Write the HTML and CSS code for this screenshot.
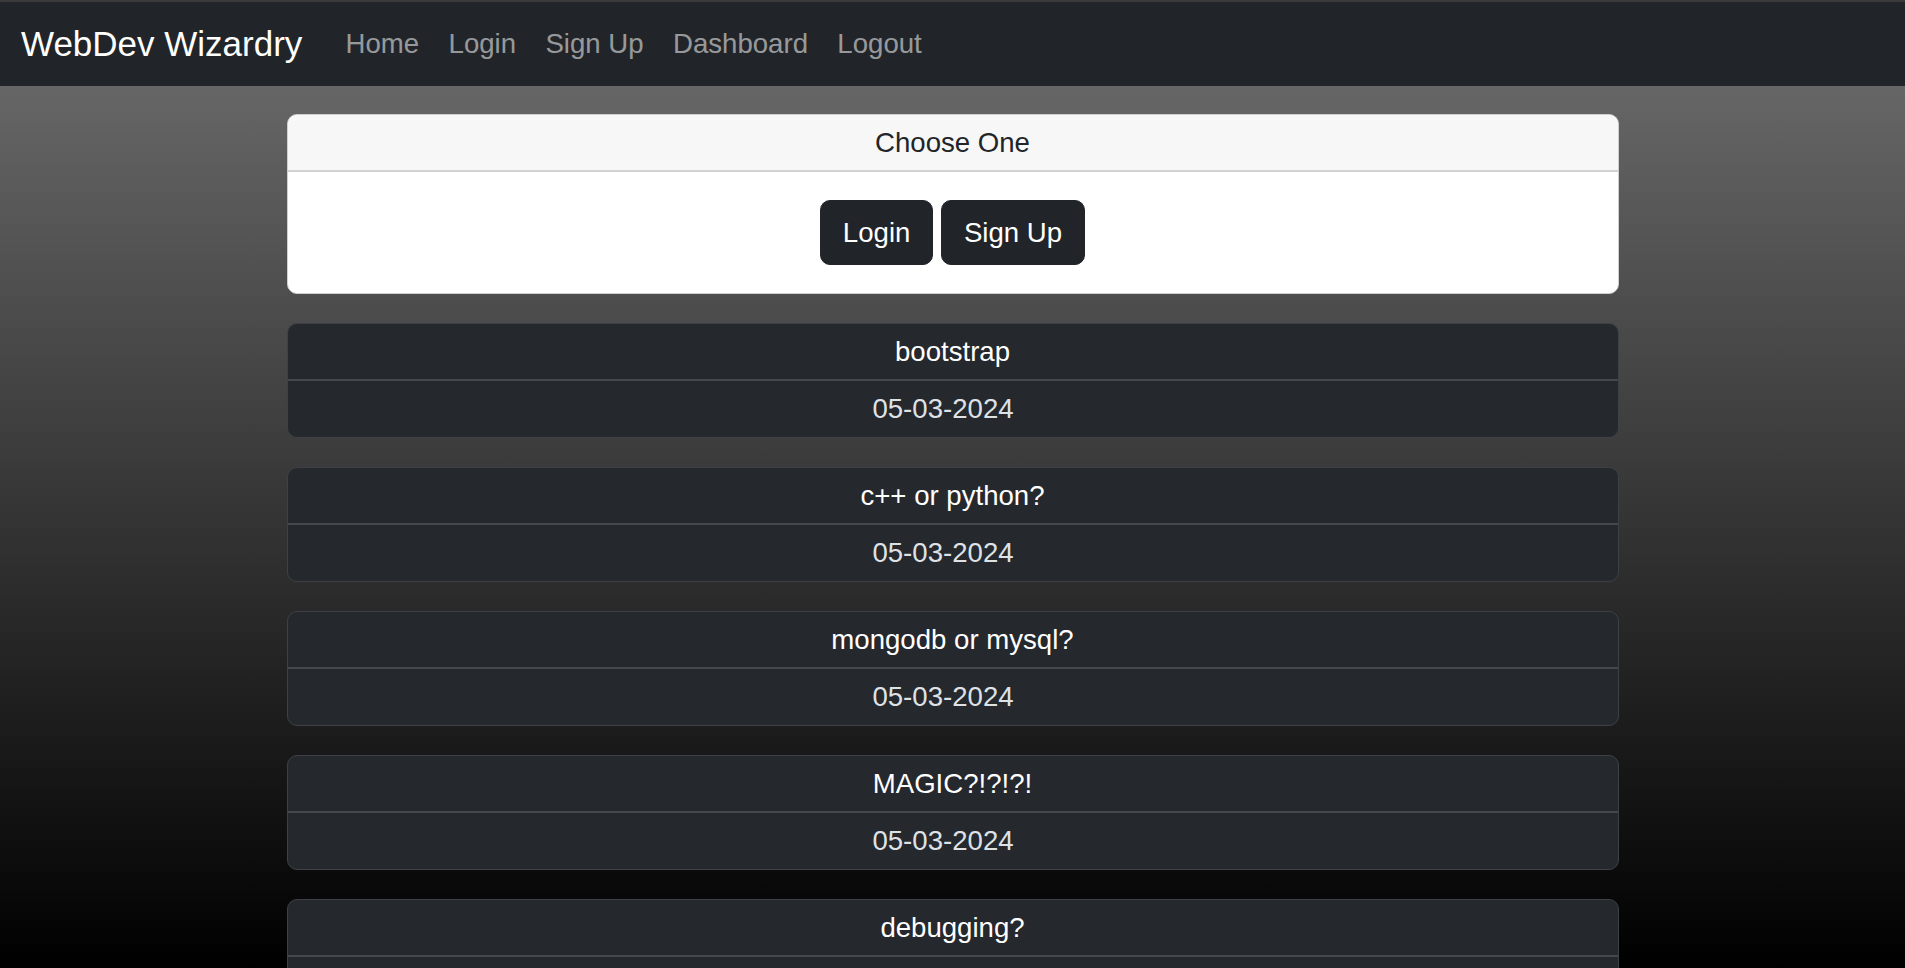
FILE: index.html
```html
<!DOCTYPE html>
<html lang="en">
<head>
<meta charset="utf-8">
<title>WebDev Wizardry</title>
<link rel="stylesheet" href="styles.css">
</head>
<body>
<nav class="navbar">
  <a class="brand" href="#">WebDev Wizardry</a>
  <ul class="nav">
    <li><a class="nav-link" href="#">Home</a></li>
    <li><a class="nav-link" href="#">Login</a></li>
    <li><a class="nav-link" href="#">Sign Up</a></li>
    <li><a class="nav-link" href="#">Dashboard</a></li>
    <li><a class="nav-link" href="#">Logout</a></li>
  </ul>
</nav>
<main class="content">
  <section class="card card-light">
    <div class="card-header">Choose One</div>
    <div class="card-body actions">
      <a class="btn" href="#">Login</a>
      <a class="btn" href="#">Sign Up</a>
    </div>
  </section>
  <article class="card card-dark">
    <div class="card-header">bootstrap</div>
    <div class="card-body date">05-03-2024</div>
  </article>
  <article class="card card-dark">
    <div class="card-header">c++ or python?</div>
    <div class="card-body date">05-03-2024</div>
  </article>
  <article class="card card-dark">
    <div class="card-header">mongodb or mysql?</div>
    <div class="card-body date">05-03-2024</div>
  </article>
  <article class="card card-dark">
    <div class="card-header">MAGIC?!?!?!</div>
    <div class="card-body date">05-03-2024</div>
  </article>
  <article class="card card-dark">
    <div class="card-header">debugging?</div>
    <div class="card-body date">05-03-2024</div>
  </article>
</main>
</body>
</html>
```
FILE: styles.css
```css
html {
  scrollbar-width: none;
}
html::-webkit-scrollbar {
  display: none;
}
body {
  margin: 0;
  font-family: "Liberation Sans", Arial, Helvetica, sans-serif;
  background: #000;
  color: #212529;
}
a {
  text-decoration: none;
}
.navbar {
  display: flex;
  align-items: center;
  height: 84px;
  border-top: 2px solid #3a3a3a;
  background: #212529;
  padding-left: 21px;
}
.brand {
  color: #fff;
  font-size: 35px;
  line-height: 40px;
  margin-right: 28.5px;
}
.nav {
  display: flex;
  list-style: none;
  margin: 0;
  padding: 0;
}
.nav-link {
  display: block;
  padding: 0 14.7px;
  font-size: 27.6px;
  line-height: 40px;
  color: rgba(255, 255, 255, 0.55);
}
.content {
  padding-top: 28px;
  min-height: 900px;
  background: linear-gradient(to bottom, #666 0, #000 882px) no-repeat;
  background-size: 100% 882px;
}
.card {
  width: 1330px;
  margin: 0 auto 29px;
  border-radius: 10px;
  overflow: hidden;
  font-size: 27.6px;
  text-align: center;
}
.card-header {
  padding: 7px 0;
  line-height: 41px;
}
.card-light {
  background: #fff;
  border: 1px solid #cfcfcf;
  margin-bottom: 28.5px;
}
.card-light .card-header {
  background: #f7f7f7;
  border-bottom: 2px solid #d2d2d2;
  color: #212529;
}
.actions {
  display: flex;
  justify-content: center;
  gap: 8.6px;
  padding: 28px 0;
}
.btn {
  display: block;
  padding: 10.8px 21.5px;
  line-height: 41.4px;
  font-size: 27.6px;
  color: #fff;
  background: #212529;
  border: 1px solid #212529;
  border-radius: 10px;
}
.card-dark {
  background: #25282d;
  border: 1px solid #3d4045;
}
.card-dark .card-header {
  color: #fff;
  border-bottom: 2px solid #45484d;
}
.date {
  padding: 7px 19px 8px 0;
  line-height: 41px;
  color: #dee2e6;
}
```
